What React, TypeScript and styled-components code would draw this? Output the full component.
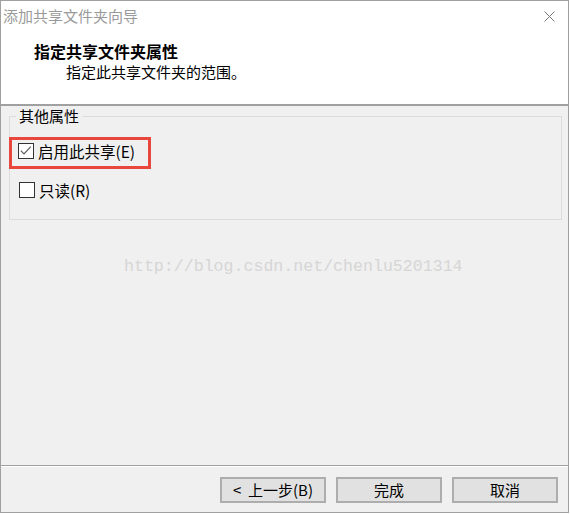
import React from 'react';
import styled, {createGlobalStyle} from 'styled-components';

const GlobalStyle = createGlobalStyle`
  html, body {
    margin: 0;
    padding: 0;
    background: #ffffff;
  }
  body {
    font-family: "Noto Sans CJK SC", "Noto Sans", sans-serif;
    font-size: 15px;
    color: #000;
  }
`;

const Window = styled.div`
  box-sizing: border-box;
  width: 569px;
  height: 513px;
  border: 1px solid #a0a0a0;
  background: #f0f0f0;
  display: flex;
  flex-direction: column;
`;

const Header = styled.div`
  background: #ffffff;
  height: 103px;
  border-bottom: 2px solid #a0a0a0;
`;

const TitleBar = styled.div`
  height: 30px;
  display: flex;
  align-items: center;
  justify-content: space-between;
  padding: 0 13px 0 2px;
`;

const Title = styled.span`
  font-size: 15px;
  line-height: 20px;
  color: #9a9a9a;
`;

const CloseButton = styled.span`
  display: flex;
  width: 11px;
  height: 11px;
`;

const Heading = styled.div`
  margin-top: 10px;
  padding-left: 33px;
  font-size: 16px;
  line-height: 20px;
  font-weight: bold;
`;

const SubHeading = styled.div`
  margin-top: 1px;
  padding-left: 65px;
  font-size: 15px;
  line-height: 20px;
`;

const Main = styled.div`
  flex: 1;
  padding: 0 6px 0 8px;
`;

const GroupBox = styled.fieldset`
  margin: 0;
  padding: 11px 0 18px 0;
  border: 1px solid #dcdcdc;
  min-width: 0;
`;

const Legend = styled.legend`
  margin-left: 6px;
  padding: 0 3px;
  font-size: 15px;
  line-height: 20px;
`;

const Highlight = styled.div`
  display: inline-flex;
  border: 3px solid #e8473e;
  padding: 0 13px 4px 6px;
  margin-left: -1px;
`;

const Row = styled.label<{$indent?: number}>`
  display: flex;
  align-items: center;
  gap: 4px;
  height: 22px;
  padding-left: ${p => p.$indent ?? 0}px;
  font-size: 15.5px;
`;

const RowGap = styled.div`
  margin-top: 10px;
`;

const Box = styled.span`
  box-sizing: border-box;
  display: flex;
  width: 16px;
  height: 16px;
  border: 1px solid #333333;
  background: #ffffff;
`;

const Watermark = styled.div`
  margin: 37px 0 0 115px;
  font-family: "Liberation Mono", monospace;
  font-size: 16.6px;
  line-height: 20px;
  color: #d6d6d6;
`;

const Footer = styled.div`
  border-top: 1px solid #a0a0a0;
  box-shadow: inset 0 1px 0 #ffffff;
  padding: 11px 10px 9px 0;
  display: flex;
  justify-content: flex-end;
  gap: 10px;
`;

const Button = styled.button`
  box-sizing: border-box;
  width: 106px;
  height: 26px;
  margin: 0;
  padding: 0;
  border: 2px solid #adadad;
  background: #e1e1e1;
  font-family: "Noto Sans CJK SC", "Noto Sans", sans-serif;
  font-size: 15px;
  line-height: 20px;
  color: #000;
  white-space: pre;
`;

const CheckBox: React.FunctionComponent<{checked?: boolean}> = ({checked}) => (
  <Box>
    {checked && (
      <svg width="14" height="14" viewBox="0 0 14 14">
        <path d="M1.8 6.6 L5 9.8 L11.8 2.6" fill="none" stroke="#5a5a5a" strokeWidth="1.2" />
      </svg>
    )}
  </Box>
);

const App: React.FunctionComponent = () => {
  return (
    <>
      <GlobalStyle />
      <Window>
        <Header>
          <TitleBar>
            <Title>添加共享文件夹向导</Title>
            <CloseButton>
              <svg width="11" height="11" viewBox="0 0 11 11">
                <path d="M0.5 0.5 L10.5 10.5 M10.5 0.5 L0.5 10.5" stroke="#7a7a7a" strokeWidth="1" />
              </svg>
            </CloseButton>
          </TitleBar>
          <Heading>指定共享文件夹属性</Heading>
          <SubHeading>指定此共享文件夹的范围。</SubHeading>
        </Header>
        <Main>
          <GroupBox>
            <Legend>其他属性</Legend>
            <Highlight>
              <Row>
                <CheckBox checked />
                启用此共享(E)
              </Row>
            </Highlight>
            <RowGap>
              <Row $indent={9}>
                <CheckBox />
                只读(R)
              </Row>
            </RowGap>
          </GroupBox>
          <Watermark>http://blog.csdn.net/chenlu5201314</Watermark>
        </Main>
        <Footer>
          <Button>{'<  上一步(B)'}</Button>
          <Button>完成</Button>
          <Button>取消</Button>
        </Footer>
      </Window>
    </>
  );
};

export default App;
